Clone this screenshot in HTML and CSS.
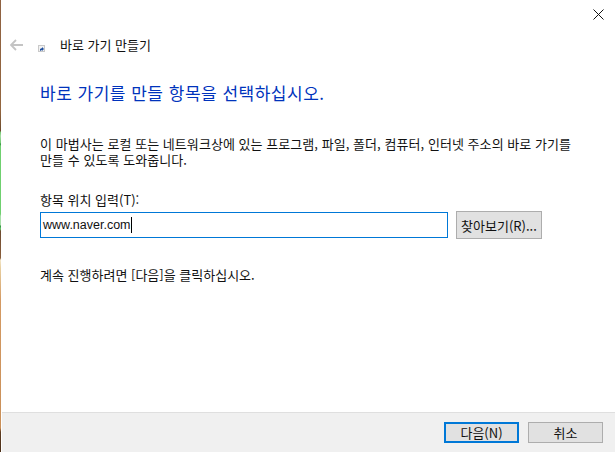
FILE: index.html
```html
<!DOCTYPE html>
<html lang="ko">
<head>
<meta charset="utf-8">
<title>바로 가기 만들기</title>
<link rel="stylesheet" href="styles.css">
</head>
<body>
<div class="edge"></div>
<div class="dialog">
    <div class="titlebar">
        <svg class="close" width="11" height="11" viewBox="0 0 11 11"><path d="M.5.5l10 10M10.500.5l-10 10" stroke="#111" fill="none"/></svg>
    </div>
    <div class="nav">
        <svg class="back" width="13" height="12" viewBox="0 0 13 12"><path d="M6 1L1 6l5 5M1 6h12" stroke="#c4c4c4" stroke-width="1.800" fill="none"/></svg>
        <svg class="wizicon" width="7" height="7" viewBox="0 0 7 7"><rect width="7" height="7" fill="#c9c9c9"/><rect x="1" y="1" width="5" height="5" fill="#f2f2f2"/><path d="M2 6V4l2-1V2l2 2-2 2V5z" fill="#1f4f9e"/></svg>
        <span class="navtitle">바로 가기 만들기</span>
    </div>
    <div class="content">
        <h1 class="heading">바로 가기를 만들 항목을 선택하십시오.</h1>
        <p class="desc">이 마법사는 로컬 또는 네트워크상에 있는 프로그램, 파일, 폴더, 컴퓨터, 인터넷 주소의 바로 가기를<br>만들 수 있도록 도와줍니다.</p>
        <div class="label">항목 위치 입력(T):</div>
        <div class="pathrow">
            <div class="pathbox"><span>www.naver.com</span><i class="caret"></i></div>
            <div class="btn browse">찾아보기(R)...</div>
        </div>
        <p class="hint">계속 진행하려면 [다음]을 클릭하십시오.</p>
    </div>
    <div class="footer">
        <div class="btn next">다음(N)</div>
        <div class="btn">취소</div>
    </div>
</div>
</body>
</html>
```

FILE: styles.css
```css
* { box-sizing: border-box; }

html, body {
    height: 452px;
    margin: 0;
    overflow: hidden;
    padding: 0;
    width: 615px;
}

body {
    background: #fff;
    color: #111;
    display: flex;
    font-family: "Noto Sans CJK KR", "Liberation Sans", sans-serif;
    font-size: 13px;
}

.edge {
    background: linear-gradient(#8f6242 0, #93663f 110px, #6b4a2c 131px, #6fc96f 132px, #a5dca5 136px, #6fc96f 143px, #2f8f3f 144px, #6fd06f 146px, #6fd06f 214px, #a9dfa9 216px, #a9dfa9 225px, #2f8f3f 226px, #6fd06f 229px, #6d4a30 231px, #8a5f3c 258px, #f3e6c8 260px, #e8cfa0 268px, #d49a63 300px, #c98f58 428px, #5e3d22 432px, #4a2f18 452px);
    flex: none;
    width: 1px;
}

.dialog {
    display: flex;
    flex: 1;
    flex-direction: column;
    height: 452px;
    padding-left: 1px;
}

.titlebar {
    display: flex;
    height: 30px;
    justify-content: flex-end;
    padding: 9px 11px 0 0;
}

.nav {
    align-items: center;
    display: flex;
    height: 30px;
    padding-left: 8px;
}

.back { margin-right: 15px; }
.wizicon { margin: 7px 15px 0 0; }
.navtitle { margin-bottom: 2px; }

.content {
    flex: 1;
    padding: 22px 0 0 38px;
}

.heading {
    color: #0033bc;
    font-size: 17px;
    font-weight: 400;
    letter-spacing: .5px;
    line-height: 22px;
    margin: 0;
}

.desc {
    letter-spacing: .05px;
    line-height: 16px;
    margin: 32px 0 0;
}

.label {
    line-height: 16px;
    margin-top: 24px;
}

.pathrow {
    align-items: center;
    display: flex;
    margin-top: 3px;
}

.pathbox {
    align-items: center;
    border: 1px solid #0078d7;
    display: flex;
    font-family: "Liberation Sans", sans-serif;
    font-size: 12.500px;
    height: 26px;
    padding: 0 0 1px 2px;
    width: 408px;
}

.caret {
    background: #000;
    height: 16px;
    width: 1px;
}

.btn {
    align-items: center;
    background: #e1e1e1;
    border: 1px solid #adadad;
    display: flex;
    height: 21px;
    justify-content: center;
    width: 75px;
}

.browse {
    height: 28px;
    margin-left: 8px;
    width: 86px;
}

.hint {
    line-height: 16px;
    margin: 28px 0 0;
}

.footer {
    align-items: center;
    background: #f0f0f0;
    border-top: 1px solid #dfdfdf;
    display: flex;
    flex: none;
    gap: 9px;
    height: 40px;
    justify-content: flex-end;
    padding-right: 12px;
}

.next { border: 2px solid #0078d7; }
```
